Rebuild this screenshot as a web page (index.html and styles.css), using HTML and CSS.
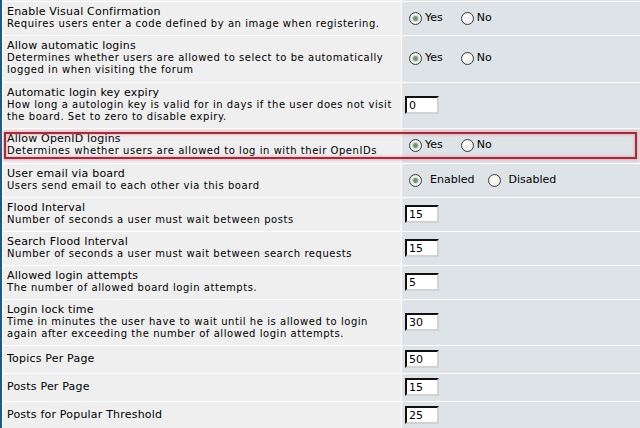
FILE: index.html
```html
<!DOCTYPE html>
<html lang="en">
<head>
    <meta charset="UTF-8">
    <meta name="viewport" content="width=device-width, initial-scale=1.0">
    <title>Board settings</title>

    <link rel="stylesheet" href="styles.css">

</head>
<body>
    <div class="forumline">
        <div class="row stub">
            <div class="row1"></div>
            <div class="row2"></div>
        </div>

        <div class="row">
            <div class="row1">
                <span class="gen">Enable Visual Confirmation</span>
                <span class="gensmall">Requires users enter a code defined by an image when registering.</span>
            </div>
            <div class="row2">
                <label class="opt"><input type="radio" name="visual" checked>Yes</label>
                <label class="opt"><input type="radio" name="visual">No</label>
            </div>
        </div>

        <div class="row tall">
            <div class="row1">
                <span class="gen">Allow automatic logins</span>
                <span class="gensmall">Determines whether users are allowed to select to be automatically<br>logged in when visiting the forum</span>
            </div>
            <div class="row2">
                <label class="opt"><input type="radio" name="autologin" checked>Yes</label>
                <label class="opt"><input type="radio" name="autologin">No</label>
            </div>
        </div>

        <div class="row">
            <div class="row1">
                <span class="gen">Automatic login key expiry</span>
                <span class="gensmall">How long a autologin key is valid for in days if the user does not visit<br>the board. Set to zero to disable expiry.</span>
            </div>
            <div class="row2">
                <input class="post" type="text" value="0">
            </div>
        </div>

        <div class="row tall marked">
            <div class="row1">
                <span class="gen">Allow OpenID logins</span>
                <span class="gensmall">Determines whether users are allowed to log in with their OpenIDs</span>
            </div>
            <div class="row2">
                <label class="opt"><input type="radio" name="openid" checked>Yes</label>
                <label class="opt"><input type="radio" name="openid">No</label>
            </div>
            <div class="mark"></div>
        </div>

        <div class="row">
            <div class="row1">
                <span class="gen">User email via board</span>
                <span class="gensmall">Users send email to each other via this board</span>
            </div>
            <div class="row2">
                <label class="opt wide"><input type="radio" name="email" checked>Enabled</label>
                <label class="opt wide"><input type="radio" name="email">Disabled</label>
            </div>
        </div>

        <div class="row">
            <div class="row1">
                <span class="gen">Flood Interval</span>
                <span class="gensmall">Number of seconds a user must wait between posts</span>
            </div>
            <div class="row2">
                <input class="post" type="text" value="15">
            </div>
        </div>

        <div class="row">
            <div class="row1">
                <span class="gen">Search Flood Interval</span>
                <span class="gensmall">Number of seconds a user must wait between search requests</span>
            </div>
            <div class="row2">
                <input class="post" type="text" value="15">
            </div>
        </div>

        <div class="row">
            <div class="row1">
                <span class="gen">Allowed login attempts</span>
                <span class="gensmall">The number of allowed board login attempts.</span>
            </div>
            <div class="row2">
                <input class="post" type="text" value="5">
            </div>
        </div>

        <div class="row">
            <div class="row1">
                <span class="gen">Login lock time</span>
                <span class="gensmall">Time in minutes the user have to wait until he is allowed to login<br>again after exceeding the number of allowed login attempts.</span>
            </div>
            <div class="row2">
                <input class="post" type="text" value="30">
            </div>
        </div>

        <div class="row">
            <div class="row1">
                <span class="gen">Topics Per Page</span>
            </div>
            <div class="row2">
                <input class="post" type="text" value="50">
            </div>
        </div>

        <div class="row">
            <div class="row1">
                <span class="gen">Posts Per Page</span>
            </div>
            <div class="row2">
                <input class="post" type="text" value="15">
            </div>
        </div>

        <div class="row">
            <div class="row1">
                <span class="gen">Posts for Popular Threshold</span>
            </div>
            <div class="row2">
                <input class="post" type="text" value="25">
            </div>
        </div>
    </div>
</body>
</html>
```

FILE: styles.css
```css
html{
    box-sizing: border-box;
    font-family: "DejaVu Sans", Verdana, sans-serif;
    font-size: 11px;
    color: #000;
}

*, *::after, *::before{
    box-sizing: inherit;
}

body{
    margin: 0;
    background-color: #fff;
}

.forumline{
    display: flex;
    flex-direction: column;
    gap: 1px;
    background-color: #fff;
    border-left: 2px solid #1d5a86;
    padding-left: 1px;
}

.row{
    display: grid;
    grid-template-columns: 398px 1fr;
    gap: 1px;
}

.row.stub{
    height: 1px;
}

.row.stub .row1,
.row.stub .row2{
    padding: 0;
}

.row1{
    display: flex;
    flex-direction: column;
    justify-content: center;
    background-color: #efefef;
    padding: 4px 4px 5px;
    white-space: nowrap;
}

.row2{
    display: flex;
    align-items: center;
    background-color: #dee3e7;
    padding: 4px 4px 5px;
}

.row.tall .row1,
.row.tall .row2{
    padding-bottom: 6px;
}

.gen{
    font-size: 11px;
    line-height: 12px;
    letter-spacing: .2px;
}

.gensmall{
    font-size: 10px;
    line-height: 12px;
    letter-spacing: .55px;
}

.opt{
    display: inline-flex;
    align-items: center;
    font-size: 11px;
    line-height: 12px;
}

.opt + .opt{
    margin-left: 15px;
}

.opt input{
    appearance: none;
    width: 13px;
    height: 13px;
    margin: 1px 3px 0;
    border: 1px solid #3a3a3a;
    border-radius: 50%;
    background: radial-gradient(circle at 40% 40%, #ffffff, #e4e4e0);
}

.opt input:checked{
    background: radial-gradient(circle, #5f8a64 0, #7d9f80 2px, #cfd8cf 3px, #f4f4f2 4px, #e4e4e0 6px);
}

.opt.wide input{
    margin-right: 8px;
}

.opt.wide + .opt.wide{
    margin-left: 11px;
}

.opt.wide + .opt.wide input{
    margin-right: 7px;
}

.post{
    width: 34px;
    height: 18px;
    margin: 0 0 0 -1px;
    padding: 0 2px;
    font-family: inherit;
    font-size: 11px;
    color: #000;
    background-color: #fff;
    border-style: solid;
    border-width: 2px;
    border-color: #111 #d2d2d2 #d2d2d2 #111;
    outline: none;
}

/* recuadro rojo de la captura */
.marked{
    position: relative;
}

.mark{
    position: absolute;
    top: 3px;
    left: 1px;
    width: 633px;
    height: 27px;
    border: 2px solid #a02c3c;
    box-shadow: 0 0 3px 1px rgba(240, 120, 140, .55), inset 0 0 3px 1px rgba(240, 120, 140, .45);
    pointer-events: none;
}
```
